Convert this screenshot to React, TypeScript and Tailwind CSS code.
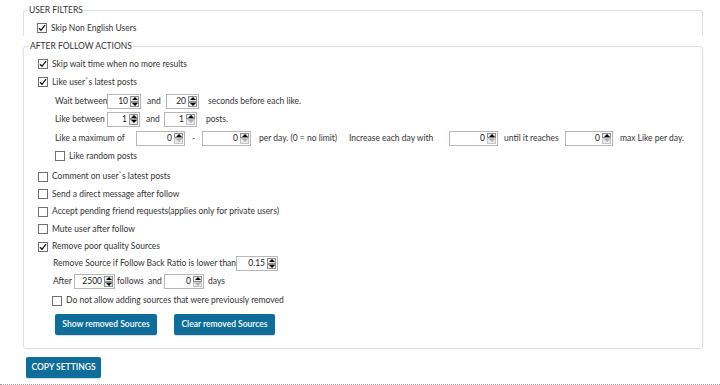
import React from "react";

type SpinProps = { value: string; w: string; downOff?: boolean };

function Spin({ value, w, downOff }: SpinProps) {
  return (
    <div className={`flex h-[15px] shrink-0 border border-[#b4b7bc] bg-white ${w}`}>
      <div className="flex-1 pr-[2px] text-right leading-[13px] text-[#222]">{value}</div>
      <div className="flex w-[10px] flex-col py-[1px] pr-[1px]">
        <div className="flex flex-1 items-center justify-center border border-[#8f8f8f] bg-[#ececec]">
          <div className="h-0 w-0 border-x-[3px] border-b-[3px] border-x-transparent border-b-black" />
        </div>
        <div
          className={`flex flex-1 items-center justify-center border bg-[#ececec] ${
            downOff ? "border-[#c4c4c4]" : "border-[#8f8f8f]"
          }`}
        >
          <div
            className={`h-0 w-0 border-x-[3px] border-t-[3px] border-x-transparent ${
              downOff ? "border-t-[#b0b0b0]" : "border-t-black"
            }`}
          />
        </div>
      </div>
    </div>
  );
}

function Check({ on }: { on?: boolean }) {
  return (
    <div className="flex h-[10px] w-[10px] shrink-0 items-center justify-center border border-[#707070] bg-white">
      {on ? (
        <svg width="8" height="8" viewBox="0 0 8 8">
          <path d="M1 4.2 L3 6.3 L7 1.2" fill="none" stroke="#111" strokeWidth="1.3" />
        </svg>
      ) : null}
    </div>
  );
}

function CheckRow({ on, label, className }: { on?: boolean; label: string; className: string }) {
  return (
    <div className={`flex items-center gap-[4px] ${className}`}>
      <Check on={on} />
      <span>{label}</span>
    </div>
  );
}

function Btn({ children, className }: { children: React.ReactNode; className: string }) {
  return (
    <button
      className={`flex h-[21px] items-center justify-center rounded-[2px] bg-[#0f6d99] text-[8.5px] font-semibold text-white shadow-[0_1px_1px_rgba(0,0,0,0.15)] ${className}`}
    >
      {children}
    </button>
  );
}

export default function App() {
  return (
    <div className="h-[385px] w-[720px] overflow-hidden whitespace-nowrap bg-white font-['Lato',sans-serif] text-[8.5px] text-[#333]">
      <div className="ml-[23px] w-[680px] pt-[4px]">
        {/* user filters */}
        <fieldset className="h-[32px] rounded-t-[3px] border border-b-0 border-[#dde1e4] pl-[4px]">
          <legend className="px-[1px] leading-[12px] text-[#333]">USER FILTERS</legend>
          <CheckRow on label="Skip Non English Users" className="ml-[9px] mt-[4px] h-[16px]" />
        </fieldset>

        {/* after follow actions */}
        <fieldset className="mt-[4px] rounded-[3px] border border-[#dde1e4] pb-[13px] pl-[5px] shadow-[0_0_2px_rgba(0,0,0,0.08)]">
          <legend className="px-[1px] leading-[12px] text-[#333]">AFTER FOLLOW ACTIONS</legend>
          <CheckRow on label="Skip wait time when no more results" className="ml-[9px] mt-[3px] h-[18px]" />
          <CheckRow on label="Like user`s latest posts" className="ml-[9px] h-[18px]" />

          <div className="ml-[26px] mt-[2px] flex h-[17px] items-center">
            <span className="w-[52px] shrink-0">Wait between</span>
            <Spin value="10" w="w-[34px]" />
            <span className="w-[25px] shrink-0 pl-[6px]">and</span>
            <Spin value="20" w="w-[33px]" />
            <span className="ml-[9px]">seconds before each like.</span>
          </div>
          <div className="ml-[26px] flex h-[18px] items-center">
            <span className="w-[52px] shrink-0">Like between</span>
            <Spin value="1" w="w-[33px]" />
            <span className="w-[24px] shrink-0 pl-[6px]">and</span>
            <Spin value="1" w="w-[33px]" downOff />
            <span className="ml-[9px]">posts.</span>
          </div>
          <div className="ml-[26px] mt-[1px] flex h-[18px] items-center">
            <span className="w-[81px] shrink-0">Like a maximum of</span>
            <Spin value="0" w="w-[49px]" downOff />
            <span className="w-[17px] shrink-0 pl-[7px]">-</span>
            <Spin value="0" w="w-[49px]" downOff />
            <span className="w-[98px] shrink-0 pl-[8px]">per day. (0 = no limit)</span>
            <span className="w-[100px] shrink-0">Increase each day with</span>
            <Spin value="0" w="w-[49px]" downOff />
            <span className="w-[67px] shrink-0 pl-[6px]">until it reaches</span>
            <Spin value="0" w="w-[48px]" downOff />
            <span className="ml-[7px]">max Like per day.</span>
          </div>
          <CheckRow label="Like random posts" className="ml-[26px] h-[18px]" />

          <div className="mt-[3px]">
            <CheckRow label="Comment on user`s latest posts" className="ml-[9px] h-[17.5px]" />
            <CheckRow label="Send a direct message after follow" className="ml-[9px] h-[17.5px]" />
            <CheckRow
              label="Accept pending friend requests(applies only for private users)"
              className="ml-[9px] h-[17.5px]"
            />
            <CheckRow label="Mute user after follow" className="ml-[9px] h-[17.5px]" />
            <CheckRow on label="Remove poor quality Sources" className="ml-[9px] h-[17.5px]" />
          </div>

          <div className="ml-[24px] flex h-[16px] items-center">
            <span className="w-[183px] shrink-0">Remove Source if Follow Back Ratio is lower than</span>
            <Spin value="0.15" w="w-[42px]" />
          </div>
          <div className="ml-[24px] mt-[1px] flex h-[18px] items-center">
            <span className="w-[21px] shrink-0">After</span>
            <Spin value="2500" w="w-[41px]" />
            <span className="w-[31px] shrink-0 pl-[2px]">follows</span>
            <span className="w-[18px] shrink-0 pl-[2px]">and</span>
            <Spin value="0" w="w-[40px]" downOff />
            <span className="ml-[4px]">days</span>
          </div>
          <CheckRow
            label="Do not allow adding sources that were previously removed"
            className="ml-[23px] mt-[1px] h-[18px]"
          />

          <div className="ml-[26px] mt-[4px] flex gap-[17px]">
            <Btn className="w-[102px]">Show removed Sources</Btn>
            <Btn className="w-[101px]">Clear removed Sources</Btn>
          </div>
        </fieldset>
      </div>

      <div className="ml-[26px] mt-[8px]">
        <Btn className="w-[75px]">COPY SETTINGS</Btn>
      </div>
      <div className="mt-[6px] border-t border-dotted border-[#9a9a9a]" />
    </div>
  );
}
